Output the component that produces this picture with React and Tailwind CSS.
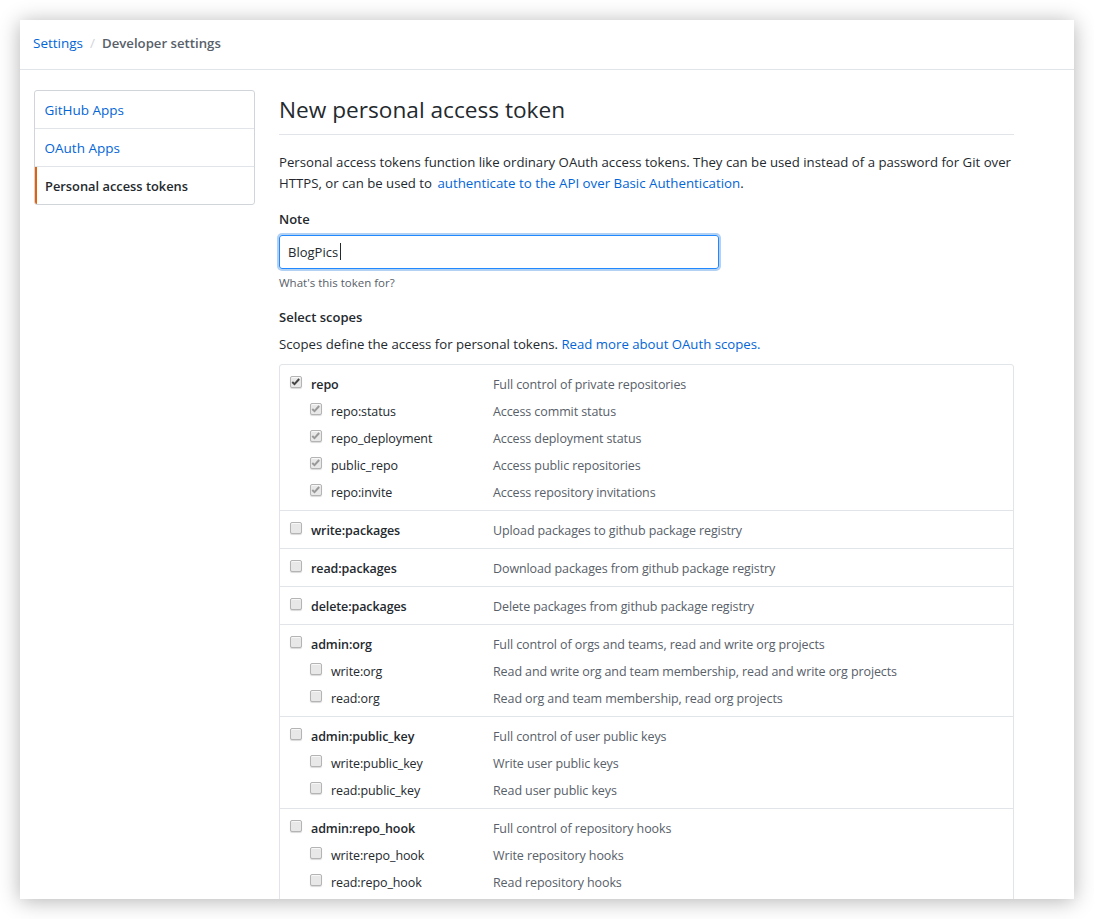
const groups = [
  [["repo", "Full control of private repositories", true], ["repo:status", "Access commit status", true], ["repo_deployment", "Access deployment status", true], ["public_repo", "Access public repositories", true], ["repo:invite", "Access repository invitations", true]],
  [["write:packages", "Upload packages to github package registry"]],
  [["read:packages", "Download packages from github package registry"]],
  [["delete:packages", "Delete packages from github package registry"]],
  [["admin:org", "Full control of orgs and teams, read and write org projects"], ["write:org", "Read and write org and team membership, read and write org projects"], ["read:org", "Read org and team membership, read org projects"]],
  [["admin:public_key", "Full control of user public keys"], ["write:public_key", "Write user public keys"], ["read:public_key", "Read user public keys"]],
  [["admin:repo_hook", "Full control of repository hooks"], ["write:repo_hook", "Write repository hooks"], ["read:repo_hook", "Read repository hooks"]],
];

function Check({ checked, sub }) {
  return (
    <span className="relative block w-[12px] h-[12px] -mt-[3px] rounded-[2px] border border-[#b4b4b4] bg-[#e8e8e8] shadow-[inset_0_1px_0_#f8f8f8,0_1px_1px_rgba(0,0,0,0.15)]">
      {checked && (
        <svg viewBox="0 0 12 12" className="absolute left-0 top-0 w-[10px] h-[10px]">
          <path d="M1.5 6 L4.2 8.6 L9.8 2.4" fill="none" stroke={sub ? "#999999" : "#444444"} strokeWidth="2.4" />
        </svg>
      )}
    </span>
  );
}

function Row({ name, desc, checked, parent }) {
  return (
    <div className="flex items-center h-[27px] text-[12.5px] tracking-[-0.1px]">
      <div className={parent ? "w-[213px] flex items-center pl-[10px]" : "w-[213px] flex items-center pl-[30px]"}>
        <Check checked={checked} sub={!parent} />
        <span className={parent ? "ml-[9px] mt-[4px] font-semibold text-[#24292e]" : "ml-[9px] mt-[4px] text-[#24292e]"}>{name}</span>
      </div>
      <div className="mt-[4px] text-[#586069]">{desc}</div>
    </div>
  );
}

export default function App() {
  return (
    <div className="p-5 h-[919px] bg-white overflow-hidden text-[13.2px] text-[#24292e] font-['Open_Sans','Noto_Sans',sans-serif]">
      <div className="h-[879px] bg-white overflow-hidden shadow-[0_2px_20px_rgba(0,0,0,0.3)]">
        <div className="h-[50px] border-b border-[#e1e4e8] pl-[13px] pb-[2px] flex items-center text-[13.5px]">
          <a className="text-[#0366d6]">Settings</a>
          <span className="mx-[7px] text-[#d1d5da]">/</span>
          <span className="font-semibold text-[13.2px] text-[#586069]">Developer settings</span>
        </div>
        <div className="flex pl-[14px] pt-5">
          <div className="w-[221px] h-[115px] border border-[#d1d5da] rounded-[3px] overflow-hidden">
            <div className="h-[38px] flex items-center pl-[9.5px] pt-[2px] text-[13.5px] text-[#0366d6] border-b border-[#e1e4e8]">GitHub Apps</div>
            <div className="h-[38px] flex items-center pl-[9.5px] pt-[2px] text-[13.5px] text-[#0366d6] border-b border-[#e1e4e8]">OAuth Apps</div>
            <div className="h-[37px] flex items-center pl-[8px] pt-[2px] text-[12.85px] font-semibold border-l-2 border-[#e36209]">Personal access tokens</div>
          </div>
          <div className="ml-[24px] w-[735px]">
            <h1 className="text-[22.65px] leading-[40px] font-normal border-b border-[#e1e4e8] h-[45px]">New personal access token</h1>
            <p className="mt-[17px] leading-[21px]">
              Personal access tokens function like ordinary OAuth access tokens. They can be used instead of a password for Git over HTTPS, or can be used to <a className="ml-[2px] text-[13.3px] text-[#0366d6]">authenticate to the API over Basic Authentication</a>.
            </p>
            <div className="mt-[15px] text-[13px] font-semibold leading-[21px]">Note</div>
            <div className="relative mt-[5px] w-[440px]">
              <input readOnly value="BlogPics" className="block w-full h-[34px] px-[8px] rounded-[3px] border border-[#2188ff] shadow-[0_0_0_2px_rgba(3,102,214,0.3)] outline-none text-[13px]" />
              <span className="absolute left-[61px] top-[8px] w-px h-[17px] bg-[#24292e]" />
            </div>
            <div className="mt-[6px] text-[11.5px] leading-[16px] text-[#586069]">What's this token for?</div>
            <div className="mt-[16px] text-[13px] font-semibold leading-[21px]">Select scopes</div>
            <p className="mt-[6px] leading-[21px]">Scopes define the access for personal tokens. <a className="text-[#0366d6]">Read more about OAuth scopes.</a></p>
            <div className="mt-[9px] border border-[#e1e4e8] rounded-t-[3px]">
              {groups.map((g, i) => (
                <div key={i} className="py-[5px] border-b border-[#e1e4e8]">
                  {g.map((r, j) => (
                    <Row key={r[0]} name={r[0]} desc={r[1]} checked={r[2]} parent={j === 0} />
                  ))}
                </div>
              ))}
            </div>
          </div>
        </div>
      </div>
    </div>
  );
}
